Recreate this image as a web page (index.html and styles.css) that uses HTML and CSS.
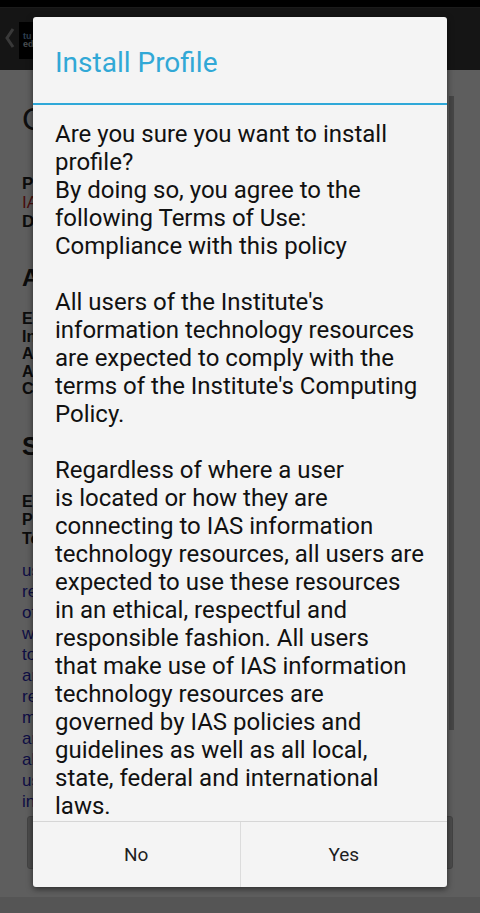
FILE: index.html
```html
<!DOCTYPE html>
<html lang="en">
<head>
<meta charset="utf-8">
<title>Install Profile</title>
<link rel="stylesheet" href="styles.css">
</head>
<body>
<div class="statusbar"></div>
<header class="appbar">
  <svg class="back" width="12" height="22" viewBox="0 0 12 22"><path d="M9 2 L3 11 L9 20"/></svg>
  <div class="logo"><span>tu</span><span>edu</span></div>
</header>
<main class="page">
  <h1 class="page-title">Certificate Profile</h1>
  <div class="info">
    <b>Profile Name:</b>
    <span class="red">IAS Wireless Network</span>
    <b>Description:</b>
  </div>
  <h2 class="section about">About</h2>
  <div class="rows">
    <b>Email:</b>
    <b>Institute:</b>
    <b>Address:</b>
    <b>Account:</b>
    <b>Contact:</b>
  </div>
  <h2 class="section summary">Summary</h2>
  <div class="rows rows2">
    <b>Email:</b>
    <b>Profile:</b>
    <b>Terms:</b>
  </div>
  <p class="links">users of the Institute<br>resources are expected<br>of the Institute's policy<br>where a user is located<br>to IAS resources<br>are expected to use<br>resources in an ethical<br>make use of IAS<br>and responsible fashion<br>all local, state and<br>users of the Institute<br>international laws</p>
  <div class="pagebtn">Install</div>
  <div class="scrollbar"></div>
</main>
<footer class="navbar"></footer>
<div class="scrim"></div>
<div class="dialog" role="dialog">
  <div class="dlg-title">Install Profile</div>
  <div class="dlg-body">
    <p>Are you sure you want to install<br>profile?<br>By doing so, you agree to the<br>following Terms of Use:<br>Compliance with this policy</p>
    <p>All users of the Institute's<br>information technology resources<br>are expected to comply with the<br>terms of the Institute's Computing<br>Policy.</p>
    <p>Regardless of where a user<br>is located or how they are<br>connecting to IAS information<br>technology resources, all users are<br>expected to use these resources<br>in an ethical, respectful and<br>responsible fashion. All users<br>that make use of IAS information<br>technology resources are<br>governed by IAS policies and<br>guidelines as well as all local,<br>state, federal and international<br>laws.</p>
  </div>
  <div class="dlg-buttons">
    <button class="dlg-btn">No</button>
    <button class="dlg-btn">Yes</button>
  </div>
</div>
</body>
</html>
```

FILE: styles.css
```css
* { box-sizing: border-box; }

html, body {
  margin: 0;
  padding: 0;
}

body {
  width: 480px;
  height: 913px;
  overflow: hidden;
  position: relative;
  background: #f6f6f6;
  font-family: Roboto, "Liberation Sans", Arial, sans-serif;
}

.statusbar {
  height: 7px;
  background: #000;
}

.appbar {
  height: 63px;
  background: #393939;
  display: flex;
  align-items: center;
  padding-left: 4px;
  gap: 3px;
  border-top: 1px solid #4a4a4a;
}

.back {
  fill: none;
  stroke: #9a9a9a;
  stroke-width: 3;
  margin-top: -2px;
}

.logo {
  width: 60px;
  height: 37px;
  background: #000;
  display: flex;
  flex-direction: column;
  justify-content: center;
  padding-left: 4px;
  font-family: "Liberation Sans", Arial, sans-serif;
  font-size: 9px;
  line-height: 8px;
  font-weight: bold;
  color: #c8d0d8;
  margin-top: 2px;
}

.logo span:first-child {
  color: #7fa8d0;
}

.page {
  position: relative;
  height: 827px;
  overflow: hidden;
  padding: 31px 22px 0;
  background: #fff;
  font-family: "Liberation Sans", Arial, sans-serif;
  color: #222;
}

.page-title {
  margin: 0;
  font-size: 32px;
  line-height: 36px;
  font-weight: normal;
  color: #2a2a2a;
  white-space: nowrap;
}

.info {
  margin-top: 37px;
  display: flex;
  flex-direction: column;
  font-size: 17px;
  line-height: 19px;
}

.red {
  color: #c42a2a;
}

.section {
  margin: 33px 0 0;
  font-size: 24px;
  line-height: 28px;
  font-weight: bold;
  color: #222;
}

.section.summary {
  margin-top: 34px;
  font-size: 25px;
}

.rows {
  margin-top: 18px;
  display: flex;
  flex-direction: column;
  font-size: 16px;
  line-height: 17.5px;
}

.rows2 {
  margin-top: 33px;
  line-height: 18.5px;
}

.links {
  margin: 12px 0 0;
  font-size: 17px;
  line-height: 21px;
  color: #2a2ab8;
  white-space: nowrap;
}

.pagebtn {
  margin-top: 4px;
  margin-left: 5px;
  width: 426px;
  height: 53px;
  background: #cfcfcf;
  border: 1px solid #b5b5b5;
  border-radius: 3px;
  display: flex;
  align-items: center;
  justify-content: center;
  font-size: 18px;
  color: #333;
}

.scrollbar {
  position: absolute;
  left: 449px;
  top: 26px;
  width: 5px;
  height: 634px;
  background: #bdbdbd;
}

.navbar {
  height: 16px;
  background: #e6e6e6;
}

.scrim {
  position: absolute;
  inset: 0;
  background: rgba(0, 0, 0, 0.63);
}

.dialog {
  position: absolute;
  left: 33px;
  top: 17px;
  width: 414px;
  height: 870px;
  background: #f4f4f4;
  border-radius: 3px;
  box-shadow: 0 2px 6px rgba(0, 0, 0, 0.55);
  display: flex;
  flex-direction: column;
  overflow: hidden;
}

.dlg-title {
  height: 88px;
  flex: none;
  display: flex;
  align-items: center;
  padding: 4px 0 0 22px;
  font-size: 28px;
  color: #31a8d6;
  border-bottom: 2px solid #2fa8d8;
}

.dlg-body {
  height: 716px;
  flex: none;
  overflow: hidden;
  padding: 15px 0 0 22px;
  font-size: 24px;
  line-height: 28px;
  color: #111;
  white-space: nowrap;
}

.dlg-body p {
  margin: 0 0 28px;
}

.dlg-buttons {
  flex: 1;
  display: flex;
  border-top: 1px solid #d6d6d6;
}

.dlg-btn {
  flex: 1;
  border: 0;
  margin: 0;
  background: transparent;
  font-family: Roboto, "Liberation Sans", Arial, sans-serif;
  font-size: 19px;
  color: #1e1e1e;
  padding: 0;
}

.dlg-btn + .dlg-btn {
  border-left: 1px solid #dcdcdc;
}
```
